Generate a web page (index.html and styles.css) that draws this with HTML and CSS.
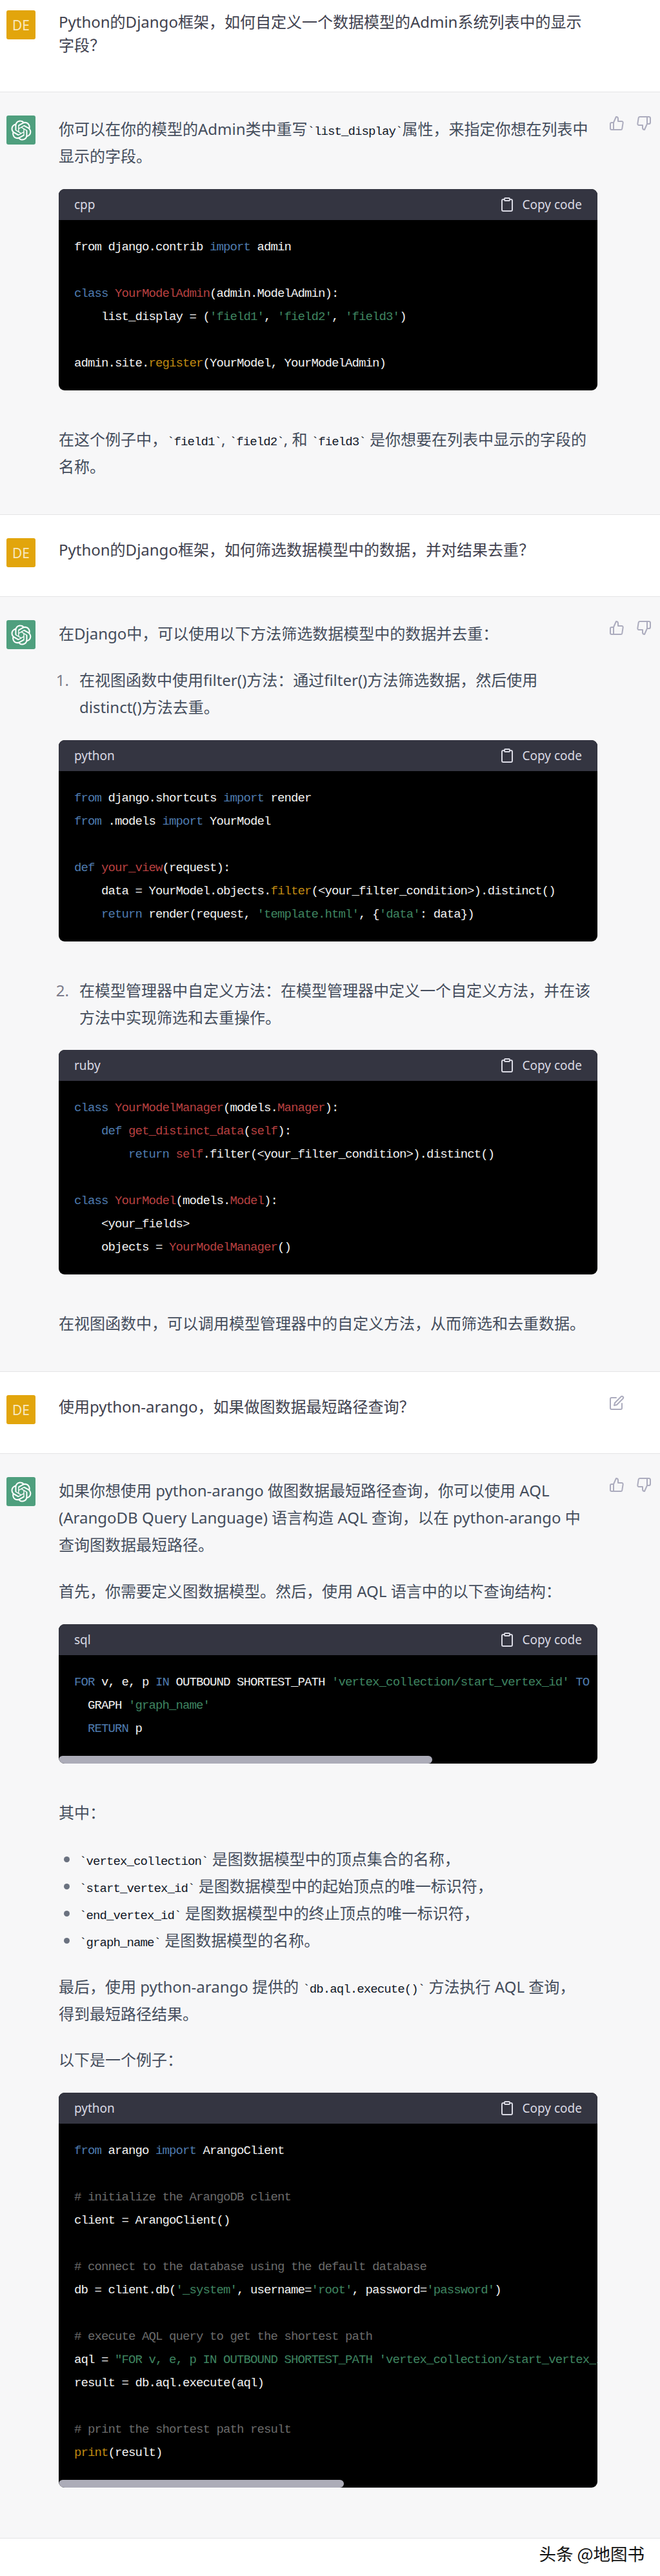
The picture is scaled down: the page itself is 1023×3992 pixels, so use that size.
FILE: index.html

```html
<!DOCTYPE html>
<html lang="zh-CN">
<head>
    <meta charset="UTF-8">
    <title>Python Django 对话</title>
    <link rel="stylesheet" href="styles.css">
</head>
<body>
    <svg class="defs" width="0" height="0">
        <symbol id="logo" viewBox="0 0 41 41"><path fill="currentColor" d="M37.5324 16.8707C37.9808 15.5241 38.1363 14.0974 37.9886 12.6859C37.8409 11.2744 37.3934 9.91076 36.676 8.68622C35.6126 6.83404 33.9882 5.3676 32.0373 4.4985C30.0864 3.62941 27.9098 3.40259 25.8215 3.85078C24.8796 2.7893 23.7219 1.94125 22.4257 1.36341C21.1295 0.785575 19.7249 0.491269 18.3058 0.500197C16.1708 0.495044 14.0893 1.16803 12.3614 2.42214C10.6335 3.67624 9.34853 5.44666 8.6917 7.47815C7.30085 7.76286 5.98686 8.3414 4.8377 9.17505C3.68854 10.0087 2.73073 11.0782 2.02839 12.312C0.956464 14.1591 0.498905 16.2988 0.721698 18.4228C0.944492 20.5467 1.83612 22.5449 3.268 24.1293C2.81966 25.4759 2.66413 26.9026 2.81182 28.3141C2.95951 29.7256 3.40701 31.0892 4.12437 32.3138C5.18791 34.1659 6.8123 35.6322 8.76321 36.5013C10.7141 37.3704 12.8907 37.5973 14.9789 37.1492C15.9208 38.2107 17.0786 39.0587 18.3747 39.6366C19.6709 40.2144 21.0755 40.5087 22.4946 40.4998C24.6307 40.5054 26.7133 39.8321 28.4418 38.5772C30.1704 37.3223 31.4556 35.5506 32.1119 33.5179C33.5027 33.2332 34.8167 32.6547 35.9659 31.821C37.115 30.9874 38.0728 29.9178 38.7752 28.684C39.8458 26.8371 40.3023 24.6979 40.0789 22.5748C39.8556 20.4517 38.9639 18.4544 37.5324 16.8707ZM22.4978 37.8849C20.7443 37.8874 19.0459 37.2733 17.6994 36.1501C17.7601 36.117 17.8666 36.0586 17.936 36.0161L25.9004 31.4156C26.1003 31.3019 26.2663 31.137 26.3813 30.9378C26.4964 30.7386 26.5563 30.5124 26.5549 30.2825V19.0542L29.9213 20.998C29.9389 21.0068 29.9541 21.0198 29.9656 21.0359C29.977 21.052 29.9842 21.0707 29.9867 21.0902V30.3889C29.9842 32.375 29.1946 34.2791 27.7909 35.6841C26.3872 37.0892 24.4838 37.8806 22.4978 37.8849ZM6.39227 31.0064C5.51397 29.4888 5.19742 27.7107 5.49804 25.9832C5.55718 26.0187 5.66048 26.0818 5.73461 26.1244L13.699 30.7248C13.8975 30.8408 14.1233 30.902 14.3532 30.902C14.583 30.902 14.8088 30.8408 15.0073 30.7248L24.731 25.1103V28.9979C24.7321 29.0177 24.7283 29.0376 24.7199 29.0556C24.7115 29.0736 24.6988 29.0893 24.6829 29.1012L16.6317 33.7497C14.9096 34.7416 12.8643 35.0097 10.9447 34.4954C9.02506 33.9811 7.38785 32.7263 6.39227 31.0064ZM4.29707 13.6194C5.17156 12.0998 6.55279 10.9364 8.19885 10.3327C8.19885 10.4013 8.19491 10.5228 8.19491 10.6071V19.808C8.19351 20.0378 8.25334 20.2638 8.36823 20.4629C8.48312 20.6619 8.64893 20.8267 8.84863 20.9404L18.5723 26.5542L15.206 28.4979C15.1894 28.5089 15.1703 28.5155 15.1505 28.5173C15.1307 28.5191 15.1107 28.516 15.0924 28.5082L7.04046 23.8557C5.32135 22.8601 4.06716 21.2235 3.55289 19.3046C3.03862 17.3858 3.30624 15.3413 4.29707 13.6194ZM31.955 20.0556L22.2312 14.4411L25.5976 12.4981C25.6142 12.4872 25.6333 12.4805 25.6531 12.4787C25.6729 12.4769 25.6928 12.4801 25.7111 12.4879L33.7631 17.1364C34.9967 17.849 36.0017 18.8982 36.6606 20.1613C37.3194 21.4244 37.6047 22.849 37.4832 24.2684C37.3617 25.6878 36.8382 27.0432 35.9743 28.1759C35.1103 29.3086 33.9415 30.1717 32.6047 30.6641C32.6047 30.5947 32.6047 30.4733 32.6047 30.3889V21.188C32.6066 20.9586 32.5474 20.7328 32.4332 20.5338C32.319 20.3348 32.154 20.1698 31.955 20.0556ZM35.3055 15.0128C35.2464 14.9765 35.1431 14.9142 35.069 14.8717L27.1045 10.2712C26.906 10.1554 26.6803 10.0943 26.4504 10.0943C26.2206 10.0943 25.9948 10.1554 25.7963 10.2712L16.0726 15.8858V11.9982C16.0715 11.9783 16.0753 11.9585 16.0837 11.9405C16.0921 11.9225 16.1048 11.9068 16.1207 11.8949L24.1719 7.25025C25.4053 6.53903 26.8158 6.19376 28.2383 6.25482C29.6608 6.31589 31.0364 6.78077 32.2044 7.59508C33.3723 8.40939 34.2842 9.53945 34.8334 10.8531C35.3826 12.1667 35.5464 13.6095 35.3055 15.0128ZM14.2424 21.9419L10.8752 19.9981C10.8576 19.9893 10.8423 19.9763 10.8309 19.9602C10.8195 19.9441 10.8122 19.9254 10.8098 19.9058V10.6071C10.8107 9.18295 11.2173 7.78848 11.9819 6.58696C12.7466 5.38544 13.8377 4.42659 15.1275 3.82264C16.4173 3.21869 17.8524 2.99464 19.2649 3.1767C20.6775 3.35876 22.0089 3.93941 23.1034 4.85067C23.0427 4.88379 22.937 4.94215 22.8668 4.98473L14.9024 9.58517C14.7025 9.69878 14.5366 9.86356 14.4215 10.0626C14.3065 10.2616 14.2466 10.4877 14.2479 10.7175L14.2424 21.9419ZM16.071 17.9991L20.4018 15.4978L24.7325 17.9975V22.9985L20.4018 25.4983L16.071 22.9985V17.9991Z"/></symbol>
        <symbol id="up" viewBox="0 0 24 24"><path d="M14 9V5a3 3 0 0 0-3-3l-4 9v11h11.28a2 2 0 0 0 2-1.7l1.38-9a2 2 0 0 0-2-2.3zM7 22H4a2 2 0 0 1-2-2v-7a2 2 0 0 1 2-2h3"/></symbol>
        <symbol id="down" viewBox="0 0 24 24"><path d="M10 15v4a3 3 0 0 0 3 3l4-9V2H5.72a2 2 0 0 0-2 1.7l-1.38 9a2 2 0 0 0 2 2.3zm7-13h2.67A2.31 2.31 0 0 1 22 4v7a2.31 2.31 0 0 1-2.33 2H17"/></symbol>
        <symbol id="edit" viewBox="0 0 24 24"><path d="M11 4H4a2 2 0 0 0-2 2v14a2 2 0 0 0 2 2h14a2 2 0 0 0 2-2v-7"/><path d="M18.5 2.5a2.121 2.121 0 0 1 3 3L12 15l-4 1 1-4 9.5-9.5z"/></symbol>
        <symbol id="clip" viewBox="0 0 24 24"><path d="M16 4h2a2 2 0 0 1 2 2v14a2 2 0 0 1-2 2H6a2 2 0 0 1-2-2V6a2 2 0 0 1 2-2h2"/><rect x="8" y="2" width="8" height="4" rx="1"/></symbol>
    </svg>

    <!-- 第一轮 -->
    <div class="row user first">
        <div class="avatar avatar-user">DE</div>
        <div class="message">
            <p>Python的Django框架，如何自定义一个数据模型的Admin系统列表中的显示<br>字段？</p>
        </div>
    </div>
    <div class="row bot">
        <div class="avatar avatar-bot"><svg class="logo"><use href="#logo"/></svg></div>
        <div class="message">
            <p>你可以在你的模型的Admin类中重写<code>`list_display`</code>属性，来指定你想在列表中显示的字段。</p>
            <div class="code-block">
                <div class="code-head"><span>cpp</span><span class="copy"><svg class="icon"><use href="#clip"/></svg>Copy code</span></div>
<pre>from django.contrib <i class="k">import</i> admin

<i class="k">class</i> <i class="t">YourModelAdmin</i>(admin.ModelAdmin):
    list_display = (<i class="s">'field1'</i>, <i class="s">'field2'</i>, <i class="s">'field3'</i>)

admin.site.<i class="b">register</i>(YourModel, YourModelAdmin)</pre>
            </div>
            <p>在这个例子中，<code>`field1`</code>, <code>`field2`</code>, 和 <code>`field3`</code> 是你想要在列表中显示的字段的名称。</p>
        </div>
        <div class="actions">
            <svg class="icon"><use href="#up"/></svg>
            <svg class="icon"><use href="#down"/></svg>
        </div>
    </div>

    <!-- 第二轮 -->
    <div class="row user">
        <div class="avatar avatar-user">DE</div>
        <div class="message">
            <p>Python的Django框架，如何筛选数据模型中的数据，并对结果去重？</p>
        </div>
    </div>
    <div class="row bot">
        <div class="avatar avatar-bot"><svg class="logo"><use href="#logo"/></svg></div>
        <div class="message">
            <p>在Django中，可以使用以下方法筛选数据模型中的数据并去重：</p>
            <ol class="steps">
                <li>在视图函数中使用filter()方法：通过filter()方法筛选数据，然后使用distinct()方法去重。</li>
            </ol>
            <div class="code-block">
                <div class="code-head"><span>python</span><span class="copy"><svg class="icon"><use href="#clip"/></svg>Copy code</span></div>
<pre><i class="k">from</i> django.shortcuts <i class="k">import</i> render
<i class="k">from</i> .models <i class="k">import</i> YourModel

<i class="k">def</i> <i class="t">your_view</i>(request):
    data = YourModel.objects.<i class="b">filter</i>(&lt;your_filter_condition&gt;).distinct()
    <i class="k">return</i> render(request, <i class="s">'template.html'</i>, {<i class="s">'data'</i>: data})</pre>
            </div>
            <ol class="steps steps-tight" start="2">
                <li>在模型管理器中自定义方法：在模型管理器中定义一个自定义方法，并在该方法中实现筛选和去重操作。</li>
            </ol>
            <div class="code-block">
                <div class="code-head"><span>ruby</span><span class="copy"><svg class="icon"><use href="#clip"/></svg>Copy code</span></div>
<pre><i class="k">class</i> <i class="t">YourModelManager</i>(models.<i class="t">Manager</i>):
    <i class="k">def</i> <i class="t">get_distinct_data</i>(<i class="t">self</i>):
        <i class="k">return</i> <i class="t">self</i>.filter(&lt;your_filter_condition&gt;).distinct()

<i class="k">class</i> <i class="t">YourModel</i>(models.<i class="t">Model</i>):
    &lt;your_fields&gt;
    objects = <i class="t">YourModelManager</i>()</pre>
            </div>
            <p>在视图函数中，可以调用模型管理器中的自定义方法，从而筛选和去重数据。</p>
        </div>
        <div class="actions">
            <svg class="icon"><use href="#up"/></svg>
            <svg class="icon"><use href="#down"/></svg>
        </div>
    </div>

    <!-- 第三轮 -->
    <div class="row user">
        <div class="avatar avatar-user">DE</div>
        <div class="message">
            <p>使用python-arango，如果做图数据最短路径查询？</p>
        </div>
        <div class="actions">
            <svg class="icon"><use href="#edit"/></svg>
        </div>
    </div>
    <div class="row bot">
        <div class="avatar avatar-bot"><svg class="logo"><use href="#logo"/></svg></div>
        <div class="message">
            <p>如果你想使用 python-arango 做图数据最短路径查询，你可以使用 AQL (ArangoDB Query Language) 语言构造 AQL 查询，以在 python-arango 中<br>查询图数据最短路径。</p>
            <p>首先，你需要定义图数据模型。然后，使用 AQL 语言中的以下查询结构：</p>
            <div class="code-block">
                <div class="code-head"><span>sql</span><span class="copy"><svg class="icon"><use href="#clip"/></svg>Copy code</span></div>
<pre><i class="k">FOR</i> v, e, p <i class="k">IN</i> OUTBOUND SHORTEST_PATH <i class="s">'vertex_collection/start_vertex_id'</i> <i class="k">TO</i> <i class="s">'vertex_collection/end_vertex_id'</i>
  GRAPH <i class="s">'graph_name'</i>
  <i class="k">RETURN</i> p</pre>
                <div class="scroll-track"><div class="scroll-thumb thumb-sql"></div></div>
            </div>
            <p>其中：</p>
            <ul class="fields">
                <li><code>`vertex_collection`</code> 是图数据模型中的顶点集合的名称，</li>
                <li><code>`start_vertex_id`</code> 是图数据模型中的起始顶点的唯一标识符，</li>
                <li><code>`end_vertex_id`</code> 是图数据模型中的终止顶点的唯一标识符，</li>
                <li><code>`graph_name`</code> 是图数据模型的名称。</li>
            </ul>
            <p class="tight">最后，使用 python-arango 提供的 <code>`db.aql.execute()`</code> 方法执行 AQL 查询，<br>得到最短路径结果。</p>
            <p>以下是一个例子：</p>
            <div class="code-block last">
                <div class="code-head"><span>python</span><span class="copy"><svg class="icon"><use href="#clip"/></svg>Copy code</span></div>
<pre><i class="k">from</i> arango <i class="k">import</i> ArangoClient

<i class="c"># initialize the ArangoDB client</i>
client = ArangoClient()

<i class="c"># connect to the database using the default database</i>
db = client.db(<i class="s">'_system'</i>, username=<i class="s">'root'</i>, password=<i class="s">'password'</i>)

<i class="c"># execute AQL query to get the shortest path</i>
aql = <i class="s">"FOR v, e, p IN OUTBOUND SHORTEST_PATH 'vertex_collection/start_vertex_id' TO 'vertex_collection/end_vertex_id' GRAPH 'graph_name' RETURN p"</i>
result = db.aql.execute(aql)

<i class="c"># print the shortest path result</i>
<i class="b">print</i>(result)</pre>
                <div class="scroll-track"><div class="scroll-thumb thumb-py"></div></div>
            </div>
        </div>
        <div class="actions">
            <svg class="icon"><use href="#up"/></svg>
            <svg class="icon"><use href="#down"/></svg>
        </div>
    </div>

    <footer class="watermark">头条 @地图书</footer>
</body>
</html>
```

FILE: styles.css

```css
body {
    margin: 0;
    padding: 0;
    background-color: #fff;
    color: #444d5c;
    font-family: "Noto Sans", "Noto Sans CJK SC", sans-serif;
    font-size: 24px;
    line-height: 42px;
}
.defs {
    position: absolute;
}
.row {
    display: flex;
    align-items: flex-start;
    padding: 36px 0 53px 10px;
    border-bottom: 1px solid #e5e5e6;
}
.row.first {
    padding-top: 16px;
}
.user {
    background-color: #fff;
    color: #40414e;
    line-height: 36px;
    padding-bottom: 54px;
}
.bot {
    background-color: #f7f7f8;
}
.avatar {
    width: 45px;
    height: 45px;
    flex-shrink: 0;
    display: flex;
    align-items: center;
    justify-content: center;
    border-radius: 3px;
    margin: 0 36px -9px 0;
    color: #fff;
}
.avatar-user {
    background-color: #e2a50c;
    font-size: 21px;
    color: #f8e8c0;
}
.avatar-bot {
    background-color: #4f9f7e;
}
.logo {
    width: 32px;
    height: 32px;
    color: #fff;
}
.message {
    width: 835px;
    flex-shrink: 0;
}
.message p {
    margin: 0 0 30px;
}
.message p.tight {
    margin-bottom: 29px;
}
.message p:last-child {
    margin-bottom: 0;
}
.message code {
    font-family: "Liberation Mono", monospace;
    font-size: 19px;
    letter-spacing: -0.9px;
    line-height: 1;
    color: #111827;
}
.actions {
    display: flex;
    gap: 18px;
    margin-left: 18px;
}
.icon {
    width: 24px;
    height: 24px;
    fill: none;
    stroke: #acacbe;
    stroke-width: 2;
    stroke-linecap: round;
    stroke-linejoin: round;
    flex-shrink: 0;
}

/* 代码块 */
.code-block {
    background-color: #000;
    border-radius: 9px;
    overflow: hidden;
    margin-bottom: 55px;
}
.code-block.last {
    margin-bottom: 25px;
}
.code-head {
    height: 48px;
    padding: 0 24px;
    background-color: #343541;
    color: #d9d9e3;
    display: flex;
    align-items: center;
    justify-content: space-between;
    font-size: 19px;
    line-height: 24px;
}
.copy {
    display: flex;
    align-items: center;
    gap: 12px;
}
.copy .icon {
    stroke: #d9d9e3;
}
pre {
    margin: 0;
    padding: 24px;
    overflow: hidden;
    color: #f2f2f2;
    font-family: "Liberation Mono", monospace;
    font-size: 19px;
    letter-spacing: -0.9px;
    line-height: 36px;
    white-space: pre;
}
pre i {
    font-style: normal;
}
.k { color: #4f7cb0; }
.t { color: #b84040; }
.s { color: #3f8560; }
.b { color: #c08a12; }
.c { color: #6b6b6b; }
.scroll-track {
    height: 12px;
}
.scroll-thumb {
    height: 12px;
    background-color: #acacb8;
    border-radius: 6px;
}
.thumb-sql {
    width: 579px;
}
.thumb-py {
    width: 442px;
}

/* 列表 */
.steps, .fields {
    margin: 0 0 30px;
    padding-left: 32px;
}
.steps-tight {
    margin-bottom: 29px;
}
.steps li::marker {
    color: #7b7b8a;
    content: counter(list-item) ".\2002\2009";
}
.fields li::marker {
    color: #6b7280;
}
.watermark {
    text-align: right;
    padding: 2px 24px 0 0;
    font-size: 26.5px;
    color: #111;
    font-family: "Noto Sans CJK SC", sans-serif;
}
```
